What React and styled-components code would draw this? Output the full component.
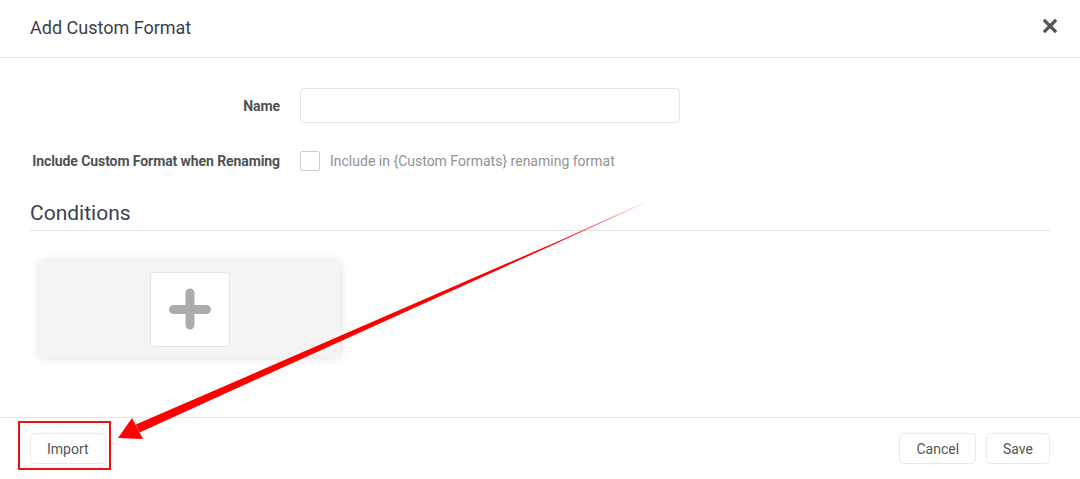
import React from 'react';
import styled, { createGlobalStyle } from 'styled-components';

const Global = createGlobalStyle`
  html, body { margin: 0; padding: 0; background: #fff; }
  body { font-family: Roboto, "Open Sans", sans-serif; color: #515253; }
  * { box-sizing: border-box; }
`;

const Modal = styled.div`
  position: relative;
  display: flex;
  flex-direction: column;
  width: 1080px;
  height: 479px;
  background: #fff;
`;

const Header = styled.div`
  display: flex;
  align-items: center;
  justify-content: space-between;
  height: 58px;
  padding: 0 20px 2px 30px;
  border-bottom: 1px solid #e5e5e5;
  font-size: 18px;
  color: #3a3f51;
`;

const Close = styled.button`
  display: flex;
  align-items: center;
  justify-content: center;
  width: 20px;
  height: 20px;
  padding: 0;
  margin-top: -4px;
  border: 0;
  background: none;
`;

const Body = styled.div`
  flex: 1;
  padding: 30px;
`;

const FormRow = styled.div`
  display: flex;
  align-items: center;
  min-height: 35px;
  margin-bottom: 20px;
`;

const Label = styled.label`
  flex: 0 0 250px;
  min-width: 0;
  margin-right: 20px;
  text-align: right;
  white-space: nowrap;
  letter-spacing: -0.09px;
  font-size: 14px;
  font-weight: 700;
  color: #515253;
`;

const TextInput = styled.input`
  width: 380px;
  height: 35px;
  padding: 6px 16px;
  border: 1px solid #dde6e9;
  border-radius: 4px;
  font-size: 14px;
  outline: none;
`;

const Check = styled.span`
  width: 20px;
  height: 20px;
  border: 1px solid #ccc;
  border-radius: 2px;
  background: #fff;
`;

const HelpText = styled.span`
  margin-left: 10px;
  font-size: 14px;
  color: #909293;
`;

const Legend = styled.div`
  width: 1020px;
  padding-bottom: 1px;
  margin-bottom: 21px;
  border-bottom: 1px solid #e5e5e5;
  font-size: 21px;
  line-height: 31px;
  color: #3a3f51;
`;

const Cards = styled.div`
  display: flex;
  flex-wrap: wrap;
`;

const Card = styled.div`
  display: flex;
  justify-content: center;
  width: 300px;
  margin: 10px;
  padding: 10px;
  border-radius: 3px;
  background: #f4f4f4;
  box-shadow: 0 0 10px 1px rgba(0, 0, 0, 0.12);
`;

const AddBox = styled.div`
  display: flex;
  align-items: center;
  justify-content: center;
  width: 80px;
  height: 75px;
  border: 1px solid #e3e3e3;
  border-radius: 4px;
  background: #fff;
`;

const Footer = styled.div`
  display: flex;
  align-items: center;
  justify-content: space-between;
  padding: 15px 30px;
  border-top: 1px solid #e5e5e5;
`;

const Group = styled.div`
  display: flex;
  gap: 10px;
`;

const Button = styled.button`
  height: 31px;
  padding: 0 16px;
  border: 1px solid #eaeaea;
  border-radius: 4px;
  background: #fff;
  font-family: Roboto, sans-serif;
  font-size: 14px;
  color: #555;
`;

const Highlight = styled.div`
  position: absolute;
  left: 18px;
  top: 421px;
  width: 93px;
  height: 49px;
  border: 2px solid #ee1111;
  pointer-events: none;
`;

const Overlay = styled.svg`
  position: absolute;
  left: 0;
  top: 0;
  pointer-events: none;
`;

function CloseIcon() {
  return (
    <svg width="14" height="14" viewBox="0 0 14 14">
      <path d="M2 2 L12 12 M12 2 L2 12" stroke="#555" strokeWidth="3.2" strokeLinecap="square" />
    </svg>
  );
}

function PlusIcon() {
  return (
    <svg width="44" height="44" viewBox="0 0 44 44">
      <path d="M22 5 V37 M5.5 21.5 H38.5" stroke="#acacac" strokeWidth="9" strokeLinecap="round" />
    </svg>
  );
}

function Arrow() {
  return (
    <Overlay width="1080" height="479">
      <defs>
        <linearGradient id="fade" gradientUnits="userSpaceOnUse" x1="648" y1="201" x2="560" y2="241">
          <stop offset="0" stopColor="#ff0000" stopOpacity="0" />
          <stop offset="1" stopColor="#ff0000" stopOpacity="1" />
        </linearGradient>
      </defs>
      <polygon points="560,240.4 560.4,241.6 139.6,432.4 135.8,424.6" fill="#ff0000" />
      <polygon points="648,200.6 648.4,201.4 560.4,241.6 560,240.4" fill="url(#fade)" />
      <polygon points="118,438 132,418 143,439" fill="#ff0000" />
    </Overlay>
  );
}

export default function App() {
  return (
    <Modal>
      <Global />
      <Header>
        Add Custom Format
        <Close><CloseIcon /></Close>
      </Header>
      <Body>
        <FormRow>
          <Label>Name</Label>
          <TextInput />
        </FormRow>
        <FormRow>
          <Label>Include Custom Format when Renaming</Label>
          <Check />
          <HelpText>Include in {'{Custom Formats}'} renaming format</HelpText>
        </FormRow>
        <Legend>Conditions</Legend>
        <Cards>
          <Card>
            <AddBox><PlusIcon /></AddBox>
          </Card>
        </Cards>
      </Body>
      <Footer>
        <Button>Import</Button>
        <Group>
          <Button>Cancel</Button>
          <Button>Save</Button>
        </Group>
      </Footer>
      <Highlight />
      <Arrow />
    </Modal>
  );
}
